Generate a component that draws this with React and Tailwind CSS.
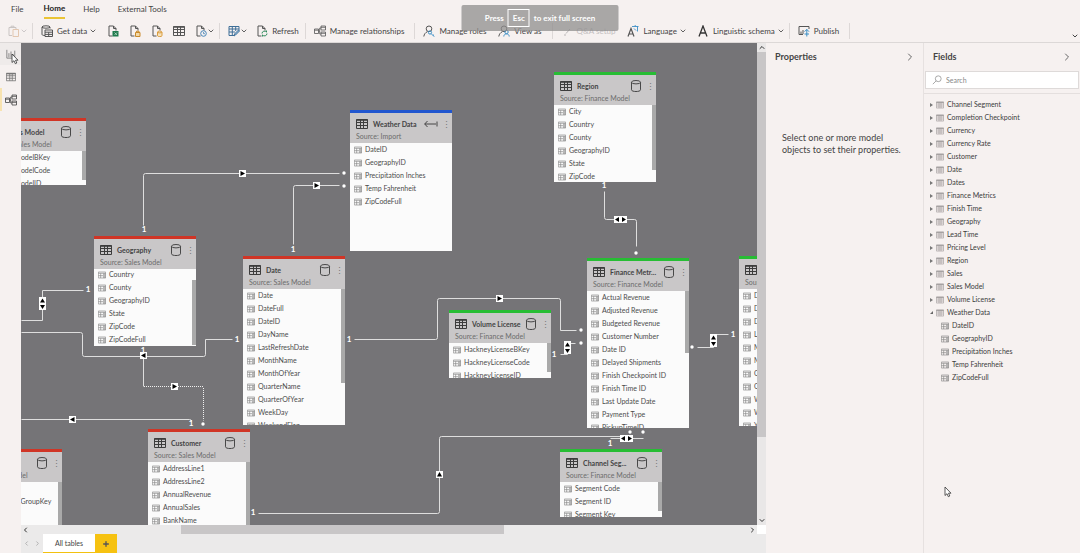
import { ChevronDown, ChevronLeft, ChevronRight, ChevronUp, Plus } from "lucide-react";

const SALES = "#d03526";
const FINANCE = "#27bd34";
const IMPORT = "#2156cf";

// Table cards on the model canvas, in canvas coordinates
const tables = [
  { id: "sales-model", title: "Sales Model", source: "Sales Model", color: SALES, x: -37, y: 75, h: 67, bar: [0, 29], rows: ["SalesModelBKey", "SalesModelCode", "SalesModelID"] },
  { id: "geography", title: "Geography", source: "Sales Model", color: SALES, x: 73, y: 193, h: 110, scrolled: true, bar: [12, 65], rows: ["Country", "County", "GeographyID", "State", "ZipCode", "ZipCodeFull"] },
  {
    id: "date", title: "Date", source: "Sales Model", color: SALES, x: 222, y: 213, h: 169, bar: [0, 94],
    rows: ["Date", "DateFull", "DateID", "DayName", "LastRefreshDate", "MonthName", "MonthOfYear", "QuarterName", "QuarterOfYear", "WeekDay", "WeekendFlag"],
  },
  { id: "customer", title: "Customer", source: "Sales Model", color: SALES, x: 127, y: 386, h: 120, bar: [0, 80], rows: ["AddressLine1", "AddressLine2", "AnnualRevenue", "AnnualSales", "BankName", "City"] },
  { id: "group", title: "Group", source: "Sales Model", color: SALES, x: -61, y: 406, h: 110, bar: [0, 70], rows: ["Code", "CustomerSalesGroupKey"] },
  { id: "weather", title: "Weather Data", source: "Import", color: IMPORT, x: 329, y: 67, h: 141, rows: ["DateID", "GeographyID", "Precipitation Inches", "Temp Fahrenheit", "ZipCodeFull"] },
  { id: "region", title: "Region", source: "Finance Model", color: FINANCE, x: 533, y: 29, h: 110, bar: [0, 65], rows: ["City", "Country", "County", "GeographyID", "State", "ZipCode"] },
  { id: "volume", title: "Volume License", source: "Finance Model", color: FINANCE, x: 428, y: 267, h: 68, bar: [0, 29], rows: ["HackneyLicenseBKey", "HackneyLicenseCode", "HackneyLicenseID"] },
  {
    id: "metrics", title: "Finance Metr...", source: "Finance Model", color: FINANCE, x: 566, y: 215, h: 170, bar: [0, 62],
    rows: ["Actual Revenue", "Adjusted Revenue", "Budgeted Revenue", "Customer Number", "Date ID", "Delayed Shipments", "Finish Checkpoint ID", "Finish Time ID", "Last Update Date", "Payment Type", "PickupTimeID"],
  },
  {
    id: "dates", title: "Dates", source: "Finance Model", color: FINANCE, x: 718, y: 213, h: 170, bar: [0, 94],
    rows: ["Date", "DateFull", "DateID", "LastRefreshDate", "MonthName", "MonthOfYear", "QuarterName", "QuarterOfYear", "WeekDay", "WeekendFlag", "Year"],
  },
  { id: "channel", title: "Channel Seg...", source: "Finance Model", color: FINANCE, x: 539, y: 406, h: 68, bar: [0, 29], rows: ["Segment Code", "Segment ID", "Segment Key"] },
];

const lines = [
  "M122 182V132Q122 130 124 130H318",
  "M272 201V144Q272 142 274 142H318",
  "M62 247H21V277H0",
  "M0 289H59Q61 289 61 291V311Q61 313 63 313H182Q184 313 184 311V296H211",
  "M122 308V343",
  "M0 376H168Q170 376 170 378",
  "M333 296H414Q416 296 416 294V257Q416 255 418 255H537Q539 255 539 257V287H555",
  "M539 311H546V300H554",
  "M676 304H692V291H707",
  "M583 148V174Q583 176 585 176H613Q615 176 615 178V203",
  "M237 470H416Q418 470 418 468V395Q418 393 420 393H609",
  "M589 395H622",
];

const ones = [[123, 186], [272, 206], [67, 246], [216, 296], [122, 307], [170, 380], [328, 296], [533, 311], [712, 291], [583, 142], [232, 469], [589, 400]];
const dots = [[323, 130], [323, 143], [182, 381], [560, 287], [560, 300], [671, 304], [615, 210], [609, 389], [622, 389]];

// Cross filter markers: direction and centre point
const markers = [
  ["right", 221, 130], ["right", 295, 142], ["vertical", 21, 261], ["left", 122, 312], ["right", 153, 343], ["left", 51, 376],
  ["right", 478, 255], ["vertical", 546, 305], ["vertical", 692, 298], ["horizontal", 599, 176], ["horizontal", 605, 395], ["up", 418, 431],
];

const fields = [
  "Channel Segment", "Completion Checkpoint", "Currency", "Currency Rate", "Customer", "Date", "Dates", "Finance Metrics", "Finish Time",
  "Geography", "Lead Time", "Pricing Level", "Region", "Sales", "Sales Model", "Volume License",
];
const weatherFields = ["DateID", "GeographyID", "Precipitation Inches", "Temp Fahrenheit", "ZipCodeFull"];

const Icon = ({ children, className = "w-3 h-3 text-[#555]" }) => (
  <svg viewBox="0 0 12 12" className={`${className} shrink-0`} fill="none" stroke="currentColor" strokeWidth="1" aria-hidden="true">
    {children}
  </svg>
);

const GridIcon = ({ className }) => (
  <Icon className={className}>
    <path d="M.5 1.500h11v9H.5zM.5 4.500h11M.5 7.500h11M4.500 1.500v9M7.500 1.500v9" />
    <path d="M.5 2h11" strokeWidth="1.600" />
  </Icon>
);

const ColumnIcon = ({ className }) => (
  <Icon className={className}>
    <path d="M.5 1.500h11v9H.5zM.5 3.500h11M4 3.500v7M.5 7h7" strokeWidth="1" />
    <path d="M7.500 3.500h4v7h-4z" fill="currentColor" stroke="none" opacity="0.600" />
  </Icon>
);

const Page = () => <path d="M5.500 11H2V1h4.500L9 3.500v2M6.500 1v2.500H9" />;

const PasteIcon = () => (
  <Icon className="w-3 h-3 text-[#c9c4c3]">
    <path d="M4 10.500H1v-8h7v1.500M3 2.500V1.200h3v1.300" />
    <path d="M5 4.500h5.500v7H5z" stroke="#e3c7b0" />
  </Icon>
);

const DataIcon = () => (
  <Icon>
    <path d="M1 2v7.500c0 .6 1.500 1 3 1M9 2v1.500" />
    <ellipse cx="5" cy="2" rx="4" ry="1.200" />
    <path d="M4 5h7.500v6.500H4zM4 7.200h7.500M4 9.400h7.500M7.700 7.200v4.300" />
  </Icon>
);

const ExcelIcon = () => (
  <Icon>
    <Page />
    <path d="M5.500 6h6v5.500h-6z" fill="#1f7a4d" stroke="none" />
    <path d="m7.500 7.500 2.500 2.500m0-2.500L7.500 10" stroke="#bfe0cc" strokeWidth="0.800" />
  </Icon>
);

const DatasetIcon = () => (
  <Icon>
    <Page />
    <path d="M6.500 7.500h4.500v4H6.500zM7.500 7.500V6.200h2.500v1.300" stroke="#c98a2a" fill="#f3d9a8" />
  </Icon>
);

const SqlIcon = () => (
  <Icon>
    <Page />
    <path d="M6.500 7v3.800c0 1 4.500 1 4.500 0V7" fill="#f7e3bd" stroke="#d99c3c" />
    <ellipse cx="8.700" cy="7" rx="2.200" ry="0.900" stroke="#d99c3c" />
  </Icon>
);

const RecentIcon = () => (
  <Icon>
    <Page />
    <circle cx="8.500" cy="8.500" r="2.800" stroke="#4a86b8" />
    <path d="M8.500 7v1.700H10" stroke="#4a86b8" strokeWidth="0.800" />
  </Icon>
);

const TransformIcon = () => (
  <Icon className="w-3 h-3 text-[#3f6f98]">
    <path d="M6 10.500H1v-9h10v4M1 4h10M1 7h6M4.300 1.500v9M7.700 1.500V6" />
    <path d="m6 11 .5-2 4-4 1 1-4 4z" fill="#9cc3e4" />
  </Icon>
);

const RefreshIcon = () => (
  <Icon>
    <Page />
    <path d="M6 8.500a2.500 2.500 0 0 1 4.500-1.400V5.500M11 8.500a2.500 2.500 0 0 1-4.500 1.400v1.600" stroke="#2f8a5b" />
  </Icon>
);

const RelationIcon = ({ className }) => (
  <Icon className={className}>
    <path d="M0.500 4h4v4.500h-4zM7 1h4.500v4H7zM7 7h4.500v4H7zM4.500 6.200h1.200M5.700 3v6M5.700 3H7M5.700 9H7M0.500 5.200h4M7 2.300h4.500M7 8.300h4.500" strokeWidth="0.800" />
  </Icon>
);

const RolesIcon = () => (
  <Icon>
    <circle cx="6" cy="3.800" r="2.800" />
    <path d="M.8 11.500c.3-2.300 1.700-4 3.500-4.800" />
    <circle cx="7" cy="7.500" r="1.600" stroke="#3d8fc6" />
    <path d="m8.200 8.700 3 3M10 10.500l1-.8" stroke="#3d8fc6" />
  </Icon>
);

const ViewAsIcon = () => (
  <Icon>
    <circle cx="6" cy="3.800" r="2.800" />
    <path d="M.8 11.500c.3-2.300 1.700-4 3.500-4.800" />
    <circle cx="8.500" cy="7" r="1.700" stroke="#3d8fc6" />
    <path d="M5.800 11.500c0-3.500 5.400-3.500 5.400 0" stroke="#3d8fc6" />
  </Icon>
);

const LanguageIcon = () => (
  <Icon>
    <path d="m1 11.500 3-8 3 8M2 9h4" strokeWidth="1.200" />
    <path d="M5 1.500h6.500M8.200 0v1.500M10.500 1.500v5M7 3.500l2 2" stroke="#3d8fc6" strokeWidth="0.900" />
  </Icon>
);

const SchemaIcon = () => (
  <Icon className="w-3 h-3 text-[#333]">
    <path d="M2 11.500 6 1l4 10.500M3.300 8h5.400" strokeWidth="1.300" />
  </Icon>
);

const PublishIcon = () => (
  <Icon>
    <path d="M5 9.500H1v-8h10V4M3 9V6.500M5 9V5" />
    <path d="M8.800 11.500V4.500M6.500 6.700l2.300-2.300L11 6.700M6.500 9h4.500" stroke="#3d8fc6" />
  </Icon>
);

const SparkIcon = () => (
  <Icon className="w-3 h-3 text-[#b9b5b6]">
    <path d="M5 8.500 9 4M3 10h2" />
  </Icon>
);

const DatabaseIcon = () => (
  <Icon className="w-3 h-[14px] text-[#484848]">
    <ellipse cx="6" cy="2.200" rx="4.500" ry="1.700" />
    <path d="M1.500 2.200v7.600c0 2.300 9 2.300 9 0V2.200" />
  </Icon>
);

const ImportIcon = () => (
  <svg viewBox="0 0 14 12" className="w-[14px] h-3 shrink-0 text-[#444]" fill="none" stroke="currentColor" aria-hidden="true">
    <path d="M.7 6H12M3.500 3 .7 6l2.800 3M13 3.500v5" />
  </svg>
);

const Pointer = ({ className }) => (
  <svg viewBox="0 0 8 12" className={`absolute w-2 h-3 pointer-events-none ${className}`} aria-hidden="true">
    <path d="M1 1v8.500l2-1.800 1.300 3 1.500-.7-1.300-2.800H7z" fill="#fff" stroke="#333" strokeWidth="0.800" />
  </svg>
);

const ToolButton = ({ icon, label, name, menu, disabled }) => (
  <button type="button" aria-label={name} disabled={disabled} className="flex items-center whitespace-nowrap disabled:text-[#c4bfc0]">
    {icon}
    {label && <span className="ml-1 mr-0.5">{label}</span>}
    {menu && <ChevronDown className="w-2 h-2" strokeWidth={2.5} />}
  </button>
);

const ToolGroup = ({ children, className = "gap-[10px] px-2" }) => (
  <div className={`flex items-center h-4 border-r border-[#ddd8d7] ${className}`}>{children}</div>
);

const Ribbon = () => (
  <header className="bg-[#f6f1f0] border-b border-[#dcd8d7]">
    <nav className="flex items-start gap-[18px] h-[19px] pl-[11px] text-[8px] leading-[18px]">
      <button type="button" className="mr-0.5">File</button>
      <button type="button" className="font-bold text-[#222] border-b-2 border-[#eac435] leading-[17px]">Home</button>
      <button type="button">Help</button>
      <button type="button">External Tools</button>
    </nav>
    <div className="flex items-center h-[23px] text-[8px]">
      <ToolGroup className="pl-2 pr-1">
        <ToolButton name="Paste" icon={<PasteIcon />} menu disabled />
      </ToolGroup>
      <ToolGroup className="gap-[10px] pl-2 pr-1">
        <ToolButton label="Get data" icon={<DataIcon />} menu />
        <ToolButton name="Excel workbook" icon={<ExcelIcon />} />
        <ToolButton name="Power BI datasets" icon={<DatasetIcon />} />
        <ToolButton name="SQL Server" icon={<SqlIcon />} />
        <ToolButton name="Enter data" icon={<GridIcon className="w-3 h-3 text-[#555]" />} />
        <ToolButton name="Recent sources" icon={<RecentIcon />} menu />
      </ToolGroup>
      <ToolGroup className="gap-2 pl-2 pr-1">
        <ToolButton name="Transform data" icon={<TransformIcon />} menu />
        <ToolButton label="Refresh" icon={<RefreshIcon />} />
      </ToolGroup>
      <ToolGroup>
        <ToolButton label="Manage relationships" icon={<RelationIcon />} />
      </ToolGroup>
      <ToolGroup>
        <ToolButton label="Manage roles" icon={<RolesIcon />} />
        <ToolButton label="View as" icon={<ViewAsIcon />} />
      </ToolGroup>
      <ToolGroup className="gap-[10px] pl-2 pr-1">
        <ToolButton label="Q&A setup" icon={<SparkIcon />} disabled />
        <ToolButton label="Language" icon={<LanguageIcon />} menu />
        <ToolButton label="Linguistic schema" icon={<SchemaIcon />} menu />
      </ToolGroup>
      <ToolGroup>
        <ToolButton label="Publish" icon={<PublishIcon />} />
      </ToolGroup>
      <button type="button" aria-label="Collapse ribbon" className="ml-auto self-start p-px">
        <ChevronDown className="w-2 h-2 mt-3" strokeWidth={3} />
      </button>
    </div>
  </header>
);

const Marker = ({ dir, x, y }) => {
  if (dir === "vertical") {
    return (
      <g transform={`translate(${x} ${y})`}>
        <rect x="-3" y="-7" width="7" height="13" fill="#fff" />
        <path d="M-2-1.500h5L.5-5.500zM-2 1h5L.5 5z" />
      </g>
    );
  }
  if (dir === "horizontal") {
    return (
      <g transform={`translate(${x} ${y})`}>
        <rect x="-6" y="-3" width="13" height="7" fill="#fff" />
        <path d="M-1-2v5L-5 .5zM2-2v5L6 .5z" />
      </g>
    );
  }
  const angle = { right: 0, left: 180, up: 270 }[dir];
  return (
    <g transform={`translate(${x} ${y}) translate(.5 .5) rotate(${angle})`}>
      <rect x="-3.500" y="-3.500" width="7" height="7" fill="#fff" />
      <path d="M-2-2.500v5L2.500 0z" />
    </g>
  );
};

const TableCard = ({ table }) => (
  <section className="absolute w-[102px] bg-[#fbfbfb] overflow-hidden" style={{ left: table.x, top: table.y, height: table.h }}>
    <div className="h-[3px]" style={{ background: table.color }} />
    <div className="h-[30px] bg-[#c9c7c8] pt-1 px-[6px]">
      <div className="flex items-center h-[14px]">
        <GridIcon className="w-3 h-3 text-[#3c3c3c]" />
        <h3 className="ml-[5px] flex-1 text-[7px] font-bold text-[#444] whitespace-nowrap">{table.title}</h3>
        {table.source === "Import" ? <ImportIcon /> : <DatabaseIcon />}
        <button type="button" aria-label={`${table.title} options`} className="ml-1 w-1 text-[9px] leading-none text-[#777]">⋮</button>
      </div>
      <p className="text-[7px] leading-[10px] text-[#6c6c6c] whitespace-nowrap">Source: {table.source}</p>
    </div>
    <div className="relative">
      <ul className={table.scrolled ? "-mt-px" : ""}>
        {table.rows.map((row) => (
          <li key={row} className="flex items-center gap-[3px] h-[13px] pl-1 text-[7px] text-[#4c4c4c] whitespace-nowrap">
            <ColumnIcon className="w-2 h-2 text-[#888]" />
            {row}
          </li>
        ))}
      </ul>
      {table.bar && <div className="absolute right-0 w-1 bg-[#a9a9a9]" style={{ top: table.bar[0], height: table.bar[1] }} />}
    </div>
  </section>
);

const Canvas = () => (
  <div className="relative flex-1 min-w-0 bg-[#757477] overflow-hidden">
    {tables.map((table) => (
      <TableCard key={table.id} table={table} />
    ))}
    <svg className="absolute inset-0 w-full h-full pointer-events-none" aria-hidden="true">
      <g fill="none" stroke="#dedede" transform="translate(.5 .5)">
        {lines.map((d) => (
          <path key={d} d={d} />
        ))}
        <path d="M122.500 343H182M182 344.500V377" strokeDasharray="1 1" stroke="#f0f0f0" />
      </g>
      <g fill="#fff" fontSize="8" fontWeight="700" textAnchor="middle">
        {ones.map(([x, y]) => (
          <text key={`${x}-${y}`} x={x} y={y + 3}>1</text>
        ))}
        {dots.map(([x, y]) => (
          <circle key={`${x}-${y}`} cx={x} cy={y} r="1.700" />
        ))}
      </g>
      {markers.map(([dir, x, y]) => (
        <Marker key={`${x}-${y}`} dir={dir} x={x} y={y} />
      ))}
    </svg>
  </div>
);

const ViewRail = () => (
  <nav className="relative w-[21px] shrink-0 flex flex-col items-center bg-[#f6f1f0]">
    <button type="button" aria-label="Report view" className="grid place-items-center w-full h-[22px] bg-[#efebea]">
      <Icon className="w-[10px] h-[10px] text-[#777]">
        <path d="M1 1v10h10M3.500 10V5M6 10V3M8.500 10V6M10.500 10V2" />
      </Icon>
    </button>
    <button type="button" aria-label="Data view" className="grid place-items-center w-full h-[23px]">
      <GridIcon className="w-[10px] h-[10px] text-[#777]" />
    </button>
    <button type="button" aria-label="Model view" className="grid place-items-center w-full h-[23px] pr-0.5 border-l-2 border-[#f8e3b0]">
      <RelationIcon className="w-3 h-3 text-[#444]" />
    </button>
    <Pointer className="left-[11px] top-[10px]" />
  </nav>
);

const ModelView = () => (
  <main className="flex-1 min-w-0 flex flex-col">
    <div className="flex-1 min-h-0 flex">
      <Canvas />
      <div className="w-[9px] shrink-0 flex flex-col items-center bg-[#e9e7e7] text-[#333]">
        <ChevronUp className="w-2 h-[9px]" strokeWidth={3} />
        <div className="w-full h-[385px] bg-[#c8c6c7]" />
        <ChevronDown className="w-2 h-[9px] mt-auto" strokeWidth={3} />
      </div>
    </div>
    <div className="flex items-center h-[9px] shrink-0 bg-[#ebeaea] text-[#333]">
      <ChevronLeft className="w-[9px] h-2" strokeWidth={3} />
      <div className="flex-1 h-full flex">
        <div className="w-[21%]" />
        <div className="w-[45%] bg-[#c8c6c7]" />
      </div>
      <ChevronRight className="w-[9px] h-2" strokeWidth={3} />
      <div className="w-[9px] h-full bg-white" />
    </div>
    <footer className="flex items-stretch h-[19px] shrink-0 bg-[#ebeaea] text-[7px]">
      <button type="button" aria-label="Previous page" className="w-[11px] grid place-items-center text-[#aaa]">
        <ChevronLeft className="w-[7px] h-[7px]" strokeWidth={3} />
      </button>
      <button type="button" aria-label="Next page" className="w-[11px] grid place-items-center text-[#aaa]">
        <ChevronRight className="w-[7px] h-[7px]" strokeWidth={3} />
      </button>
      <button type="button" className="w-[52px] bg-white border-b border-[#f2c110] text-[#444]">All tables</button>
      <button type="button" aria-label="New layout" className="w-[22px] grid place-items-center bg-[#f6c211] text-[#555]">
        <Plus className="w-2 h-2" strokeWidth={4} />
      </button>
    </footer>
  </main>
);

const PaneHeader = ({ title }) => (
  <div className="flex items-center justify-between h-7 pl-[9px] pr-[7px]">
    <h2 className="text-[9px] font-bold text-[#444]">{title}</h2>
    <button type="button" aria-label={`Collapse ${title}`}>
      <ChevronRight className="w-3 h-3 text-[#666]" />
    </button>
  </div>
);

const Properties = () => (
  <aside className="w-[157px] shrink-0 bg-[#f6f1f0]">
    <PaneHeader title="Properties" />
    <p className="mt-[61px] pl-4 text-[9px] leading-3 text-[#444] whitespace-nowrap">
      Select one or more model
      <br />
      objects to set their properties.
    </p>
  </aside>
);

const Fields = () => (
  <aside className="w-[157px] shrink-0 bg-[#f6f1f0] border-l border-[#e6e1e0]">
    <PaneHeader title="Fields" />
    <label className="flex items-center gap-1 mx-px h-[18px] px-[6px] bg-white border border-[#dedad9]">
      <Icon className="w-[10px] h-[10px] text-[#999]">
        <circle cx="7.500" cy="4.500" r="3.500" />
        <path d="m5 7-4 4" />
      </Icon>
      <input type="search" placeholder="Search" aria-label="Search" className="w-full min-w-0 text-[7px] outline-none placeholder:text-[#888]" />
    </label>
    <ul className="mt-1 pt-1 border-t border-[#e4dfde] text-[7px] text-[#3c3c3c]">
      {fields.map((name) => (
        <li key={name}>
          <button type="button" className="flex items-center gap-[3px] h-[13px] pl-[5px] whitespace-nowrap">
            <span className="w-1 h-1 grid place-items-center"><span className="border-y-2 border-y-transparent border-l-3 border-l-[#777]" /></span>
            <GridIcon className="w-2 h-2 text-[#a09c9c]" />
            {name}
          </button>
        </li>
      ))}
      <li>
        <button type="button" aria-expanded="true" className="flex items-center gap-[3px] h-[13px] pl-[5px] whitespace-nowrap">
          <span className="w-1 h-1 grid place-items-center"><span className="border-t-3 border-t-transparent border-r-3 border-r-[#666]" /></span>
          <GridIcon className="w-2 h-2 text-[#a09c9c]" />
          Weather Data
        </button>
        <ul>
          {weatherFields.map((name) => (
            <li key={name} className="flex items-center gap-[3px] h-[13px] pl-[17px] whitespace-nowrap">
              <ColumnIcon className="w-2 h-2 text-[#888]" />
              {name}
            </li>
          ))}
        </ul>
      </li>
    </ul>
  </aside>
);

const App = () => {
  return (
    <div className="relative h-screen flex flex-col overflow-hidden bg-[#f6f1f0] text-[#444] font-['Lato','Open_Sans',sans-serif]">
      <Ribbon />
      <div className="flex-1 min-h-0 flex">
        <ViewRail />
        <ModelView />
        <Properties />
        <Fields />
      </div>
      <div role="status" className="absolute top-[5px] left-1/2 -translate-x-1/2 flex items-center justify-center gap-1 w-[157px] h-[26px] rounded-xs bg-[#8f8d8e]/75 text-[8px] font-bold text-white">
        Press
        <kbd className="px-1 border border-white font-[inherit] leading-4">Esc</kbd>
        to exit full screen
      </div>
      <Pointer className="left-[944px] top-[486px]" />
    </div>
  );
};

export default App;
